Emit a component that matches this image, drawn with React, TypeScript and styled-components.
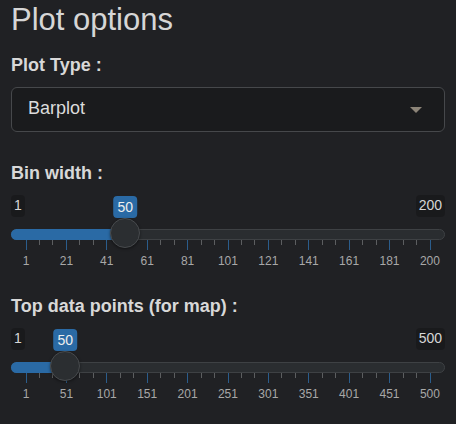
import * as React from "react";
import styled, { createGlobalStyle } from "styled-components";

const GlobalStyle = createGlobalStyle`
  html, body {
    margin: 0;
    padding: 0;
    background: #202124;
  }
  body {
    font-family: "Liberation Sans", Arial, sans-serif;
    color: #d8d8d8;
  }
`;

const Panel = styled.div`
  width: 456px;
  height: 424px;
  box-sizing: border-box;
  padding: 1px 11px 0;
  background: #202124;
  overflow: hidden;
`;

const Title = styled.h2`
  margin: 0 0 14px;
  font-size: 31px;
  line-height: 37px;
  font-weight: 400;
  color: #d6d6d6;
`;

type GroupProps = {
  $gap: number;
};
const FormGroup = styled.div`
  margin-bottom: ${(props: GroupProps) => props.$gap}px;
`;

const Label = styled.div`
  font-size: 18px;
  line-height: 27px;
  font-weight: 700;
  color: #d8d8d8;
`;

const SelectBox = styled.div`
  margin-top: 8px;
  height: 45px;
  box-sizing: border-box;
  display: flex;
  align-items: center;
  justify-content: space-between;
  padding: 0 22px 0 16px;
  border: 1px solid #46484b;
  border-radius: 6px;
  background: #1a1b1d;

  .value {
    font-size: 18px;
    line-height: 27px;
    padding-bottom: 3px;
    color: #dcdcdc;
  }

  .caret {
    width: 0;
    height: 0;
    border-top: 6px solid #8c8478;
    border-left: 6px solid transparent;
    border-right: 6px solid transparent;
  }
`;

const SliderRoot = styled.div`
  padding-top: 8px;
`;

const TopRow = styled.div`
  position: relative;
  display: flex;
  justify-content: space-between;
  height: 22px;
`;

const EdgeLabel = styled.span`
  font-size: 14px;
  line-height: 20px;
  padding: 0 3px;
  border-radius: 4px;
  background: rgba(0, 0, 0, 0.2);
  color: #d6d6d6;
`;

const Bubble = styled.span`
  position: absolute;
  top: 1px;
  transform: translateX(-50%);
  font-size: 14px;
  line-height: 20px;
  padding: 1px 4px;
  border-radius: 4px;
  background: #2a6aa5;
  color: #eeeeee;
`;

const TrackArea = styled.div`
  position: relative;
  margin-top: 12px;
  height: 11px;
`;

const Line = styled.div`
  height: 11px;
  box-sizing: border-box;
  border: 1px solid #3e4144;
  border-radius: 6px;
  background: #2a2d30;
`;

const Fill = styled.div`
  position: absolute;
  left: 0;
  top: 0;
  height: 11px;
  border-radius: 6px 0 0 6px;
  background: #2a6aa5;
`;

const Handle = styled.div`
  position: absolute;
  top: -11px;
  width: 30px;
  height: 30px;
  box-sizing: border-box;
  transform: translateX(-50%);
  border-radius: 50%;
  border: 1px solid #484b4e;
  background: #2b2e31;
  box-shadow: 0 1px 3px rgba(0, 0, 0, 0.45);
`;

// tick scale: ten segments between the handle-radius insets
const TickRow = styled.div`
  display: flex;
  padding: 0 14.5px;
  height: 10px;
`;

type SegmentProps = {
  $last: boolean;
};
const Segment = styled.div`
  flex: 1;
  display: flex;
  align-items: flex-start;
  justify-content: space-evenly;
  box-sizing: border-box;
  border-left: 1px solid #2b5d8c;
  border-right: ${(props: SegmentProps) =>
    props.$last ? "1px solid #2b5d8c" : "none"};

  span {
    width: 1px;
    height: 5px;
    background: #5c5e60;
  }
`;

const LabelRow = styled.div`
  display: flex;
  justify-content: space-between;
  padding: 4px 15px 0;
  height: 16px;

  span {
    width: 0;
    display: flex;
    justify-content: center;
    font-size: 12px;
    line-height: 14px;
    color: #a8a8a8;
    white-space: nowrap;
  }
`;

// position along the usable line (handle radius kept free at both ends)
const at = (p: number) => `calc(14.5px + ${p} * (100% - 29px))`;

const Slider: React.FC<{ min: number; max: number; value: number }> = props => {
  const { min, max, value } = props;
  const p = (value - min) / (max - min);
  const step = (max - min + 1) / 10;
  const segments = Array.from({ length: 10 }, (_, i) => i);
  const marks = Array.from({ length: 11 }, (_, i) => (i < 10 ? min + i * step : max));

  return (
    <SliderRoot>
      <TopRow>
        <EdgeLabel>{min}</EdgeLabel>
        <EdgeLabel>{max}</EdgeLabel>
        <Bubble style={{ left: at(p) }}>{value}</Bubble>
      </TopRow>
      <TrackArea>
        <Line />
        <Fill style={{ width: at(p) }} />
        <Handle style={{ left: at(p) }} />
      </TrackArea>
      <TickRow>
        {segments.map(i => (
          <Segment key={i} $last={i === 9}>
            <span />
            <span />
          </Segment>
        ))}
      </TickRow>
      <LabelRow>
        {marks.map(m => (
          <span key={m}>{m}</span>
        ))}
      </LabelRow>
    </SliderRoot>
  );
};

const App: React.FC = () => {
  return (
    <Panel>
      <GlobalStyle />
      <Title>Plot options</Title>
      <FormGroup $gap={28}>
        <Label>Plot Type :</Label>
        <SelectBox>
          <span className="value">Barplot</span>
          <span className="caret" />
        </SelectBox>
      </FormGroup>
      <FormGroup $gap={23}>
        <Label>Bin width :</Label>
        <Slider min={1} max={200} value={50} />
      </FormGroup>
      <FormGroup $gap={0}>
        <Label>Top data points (for map) :</Label>
        <Slider min={1} max={500} value={50} />
      </FormGroup>
    </Panel>
  );
};

export default App;
